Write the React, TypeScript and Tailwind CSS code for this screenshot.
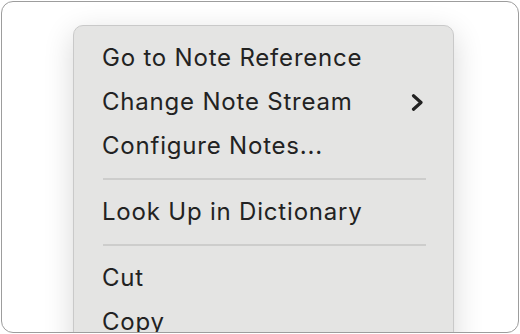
import React from "react";

function Row({ label, sub }: { label: string; sub?: boolean }) {
  return (
    <div className="flex items-center h-[44px] pl-[28px] pr-[29px]">
      <span className="flex-1 tracking-[0.8px]">{label}</span>
      {sub && (
        <svg width="13" height="17" viewBox="0 0 13 17">
          <path d="M2.5 1.8 L10 8.5 L2.5 15.2" fill="none" stroke="#222222" strokeWidth="3.2" strokeLinecap="round" strokeLinejoin="round" />
        </svg>
      )}
    </div>
  );
}

function Sep() {
  return (
    <div className="h-[22px] flex items-center pl-[29px] pr-[27px]">
      <div className="h-[2px] w-full bg-[#cdcdcc]" />
    </div>
  );
}

export default function App() {
  return (
    <div className="w-[520px] h-[334px] bg-white p-px">
      <div className="w-full h-full rounded-[12px] border border-[#9d9d9d] bg-white overflow-hidden relative">
        <div
          className="absolute left-[71px] top-[23px] w-[381px] h-[360px] rounded-[10px] border border-[#c9c9c9] bg-[#e4e4e3] shadow-[0_8px_30px_rgba(0,0,0,0.16)] pt-[10px] text-[24px] text-[#222222]"
          style={{ fontFamily: "Inter, 'Liberation Sans', sans-serif" }}
        >
          <Row label="Go to Note Reference" />
          <Row label="Change Note Stream" sub />
          <Row label="Configure Notes..." />
          <Sep />
          <Row label="Look Up in Dictionary" />
          <Sep />
          <Row label="Cut" />
          <Row label="Copy" />
        </div>
      </div>
    </div>
  );
}
